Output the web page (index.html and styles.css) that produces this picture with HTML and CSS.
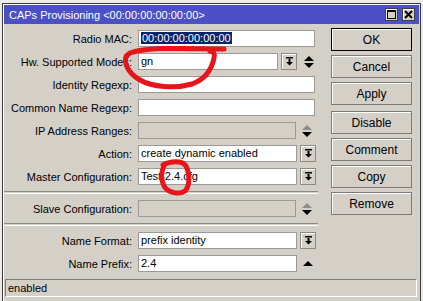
FILE: index.html
```html
<!DOCTYPE html>
<html lang="en">
  <head>
    <meta charset="UTF-8" />
    <title>CAPs Provisioning</title>
    <link rel="stylesheet" href="styles.css">
  </head>
  <body>
    <div class="window">
      <div class="titlebar">
        <span class="title">CAPs Provisioning &lt;00:00:00:00:00:00&gt;</span>
        <span class="tbtn">
          <svg width="11" height="11" viewBox="0 0 11 11"><rect x="1.5" y="1.5" width="8" height="8" fill="none" stroke="#000" stroke-width="1"/><rect x="1" y="1" width="9" height="2" fill="#000"/></svg>
        </span>
        <span class="tbtn">
          <svg width="11" height="11" viewBox="0 0 11 11"><path d="M2 2 L9 9 M9 2 L2 9" stroke="#000" stroke-width="2"/></svg>
        </span>
      </div>

      <div class="content">
        <div class="form">
          <div class="row">
            <label>Radio MAC:</label>
            <div class="field wide"><span class="sel">00:00:00:00:00:00</span></div>
          </div>
          <div class="row">
            <label>Hw. Supported Modes:</label>
            <div class="field short">gn</div>
            <span class="ddbtn"></span>
            <span class="arrows up-on down-on"></span>
          </div>
          <div class="row">
            <label>Identity Regexp:</label>
            <div class="field wide"></div>
          </div>
          <div class="row">
            <label>Common Name Regexp:</label>
            <div class="field wide"></div>
          </div>
          <div class="row">
            <label>IP Address Ranges:</label>
            <div class="field mid disabled"></div>
            <span class="arrows up-off down-on"></span>
          </div>
          <div class="row">
            <label>Action:</label>
            <div class="field mid">create dynamic enabled</div>
            <span class="ddbtn"></span>
          </div>
          <div class="row">
            <label>Master Configuration:</label>
            <div class="field mid">Test-2.4.cfg</div>
            <span class="ddbtn"></span>
          </div>
          <div class="sep"></div>
          <div class="row">
            <label>Slave Configuration:</label>
            <div class="field mid disabled"></div>
            <span class="arrows up-off down-on"></span>
          </div>
          <div class="sep"></div>
          <div class="row">
            <label>Name Format:</label>
            <div class="field mid">prefix identity</div>
            <span class="ddbtn"></span>
          </div>
          <div class="row">
            <label>Name Prefix:</label>
            <div class="field mid">2.4</div>
            <span class="arrows up-on"></span>
          </div>
        </div>

        <div class="buttons">
          <button class="default">OK</button>
          <button>Cancel</button>
          <button>Apply</button>
          <button class="spaced">Disable</button>
          <button>Comment</button>
          <button>Copy</button>
          <button>Remove</button>
        </div>
      </div>

      <div class="status">enabled</div>
    </div>

    <!-- red marker scribbles drawn on the screenshot -->
    <svg class="marks" width="423" height="301" viewBox="0 0 423 301">
      <path d="M224 49 C195 49 150 46 130 53 C121 58 126 72 140 80 C152 87 175 89 192 84 C206 79 212 68 214 58 C215 54 214 52 210 51" fill="none" stroke="#e8141a" stroke-width="5" stroke-linecap="round"/>
      <path d="M163 165 C170 161 182 160 186 166 C190 174 190 186 185 191 C179 195 168 193 164 186 C161 180 161 172 164 166" fill="none" stroke="#e8141a" stroke-width="5" stroke-linecap="round"/>
    </svg>
  </body>
</html>
```

FILE: styles.css
```css
body {
  margin: 0;
  width: 423px;
  height: 301px;
  overflow: hidden;
  position: relative;
  background-color: #ecebe8;
  font-family: "Liberation Sans", Arial, sans-serif;
  font-size: 11px;
  color: #000;
}
.window {
  margin: 3px 0 0 2px;
  width: 417px;
  height: 320px;
  border: 1px solid #3c3c3c;
  background-color: #d4d0c8;
  box-shadow: inset 1px 1px 0 #ffffff;
}
.titlebar {
  height: 19px;
  margin: 1px 1px 0 1px;
  background-color: #4b50c6;
  display: flex;
  align-items: center;
  padding: 0 4px 0 5px;
}
.title {
  color: #fff;
  font-size: 11px;
  flex: 1;
}
.tbtn {
  width: 13px;
  height: 13px;
  margin-left: 4px;
  background-color: #d4d0c8;
  border: 1px solid #404040;
  box-shadow: inset 1px 1px 0 #fff;
  display: flex;
  align-items: center;
  justify-content: center;
  box-sizing: border-box;
}
.content {
  display: flex;
  padding-top: 6px;
}
.form {
  width: 315px;
  display: flex;
  flex-direction: column;
  gap: 6px;
}
.row {
  display: flex;
  align-items: center;
  height: 17px;
}
.row label {
  width: 129px;
  padding-right: 6px;
  text-align: right;
  white-space: nowrap;
}
.field {
  height: 17px;
  box-sizing: border-box;
  border: 1px solid #9c9a94;
  background-color: #fff;
  padding-left: 2px;
  line-height: 15px;
  white-space: nowrap;
  overflow: hidden;
}
.field.wide {
  width: 177px;
}
.field.mid {
  width: 159px;
}
.field.short {
  width: 140px;
}
.field.disabled {
  background-color: #d4d0c8;
  width: 158px;
}
.sel {
  background-color: #0a246a;
  color: #fff;
  padding: 0 1px;
}
.ddbtn {
  width: 16px;
  height: 17px;
  margin-left: 3px;
  box-sizing: border-box;
  border: 1px solid #8c8a84;
  box-shadow: inset 1px 1px 0 #fff;
  background: #d4d0c8 url("data:image/svg+xml;utf8,<svg xmlns='http://www.w3.org/2000/svg' width='9' height='9'><rect x='1' y='0' width='7' height='1.5' fill='black'/><rect x='3.5' y='2' width='2' height='3' fill='black'/><path d='M1 5 L8 5 L4.5 8.5 Z' fill='black'/></svg>") no-repeat center;
}
.arrows {
  width: 16px;
  height: 17px;
  margin-left: 3px;
  position: relative;
}
.field.short + .ddbtn + .arrows {
  margin-left: 4px;
  width: 15px;
}
.arrows.up-on::before,
.arrows.up-off::before {
  content: "";
  position: absolute;
  left: 3px;
  top: 3px;
  border-left: 5px solid transparent;
  border-right: 5px solid transparent;
  border-bottom: 5px solid #000;
}
.arrows.up-off::before {
  border-bottom-color: #8e8c88;
}
.arrows.down-on::after {
  content: "";
  position: absolute;
  left: 3px;
  top: 10px;
  border-left: 5px solid transparent;
  border-right: 5px solid transparent;
  border-top: 5px solid #000;
}
.arrows.up-on:not(.down-on)::before {
  top: 6px;
}
.sep {
  height: 1px;
  border-top: 1px solid #8c8a84;
  border-bottom: 1px solid #fff;
  margin-left: 1px;
  width: 314px;
}
.buttons {
  margin-left: 13px;
  margin-top: -2px;
  width: 81px;
  display: flex;
  flex-direction: column;
  gap: 4px;
}
.buttons button {
  height: 23px;
  font-family: "Liberation Sans", Arial, sans-serif;
  font-size: 12px;
  color: #000;
  background-color: #d4d0c8;
  border: 1px solid #7c7a76;
  box-shadow: inset 1px 1px 0 #fff;
  padding: 0;
}
.buttons button.default {
  border-color: #000;
}
.buttons button.spaced {
  margin-top: 2px;
}
.status {
  margin: 7px 3px 0 2px;
  height: 18px;
  box-sizing: border-box;
  border-top: 1px solid #7c7a76;
  border-left: 1px solid #7c7a76;
  border-bottom: 1px solid #fff;
  border-right: 1px solid #fff;
  padding-left: 2px;
  line-height: 16px;
}
.marks {
  position: absolute;
  left: 0;
  top: 0;
  pointer-events: none;
}
```
